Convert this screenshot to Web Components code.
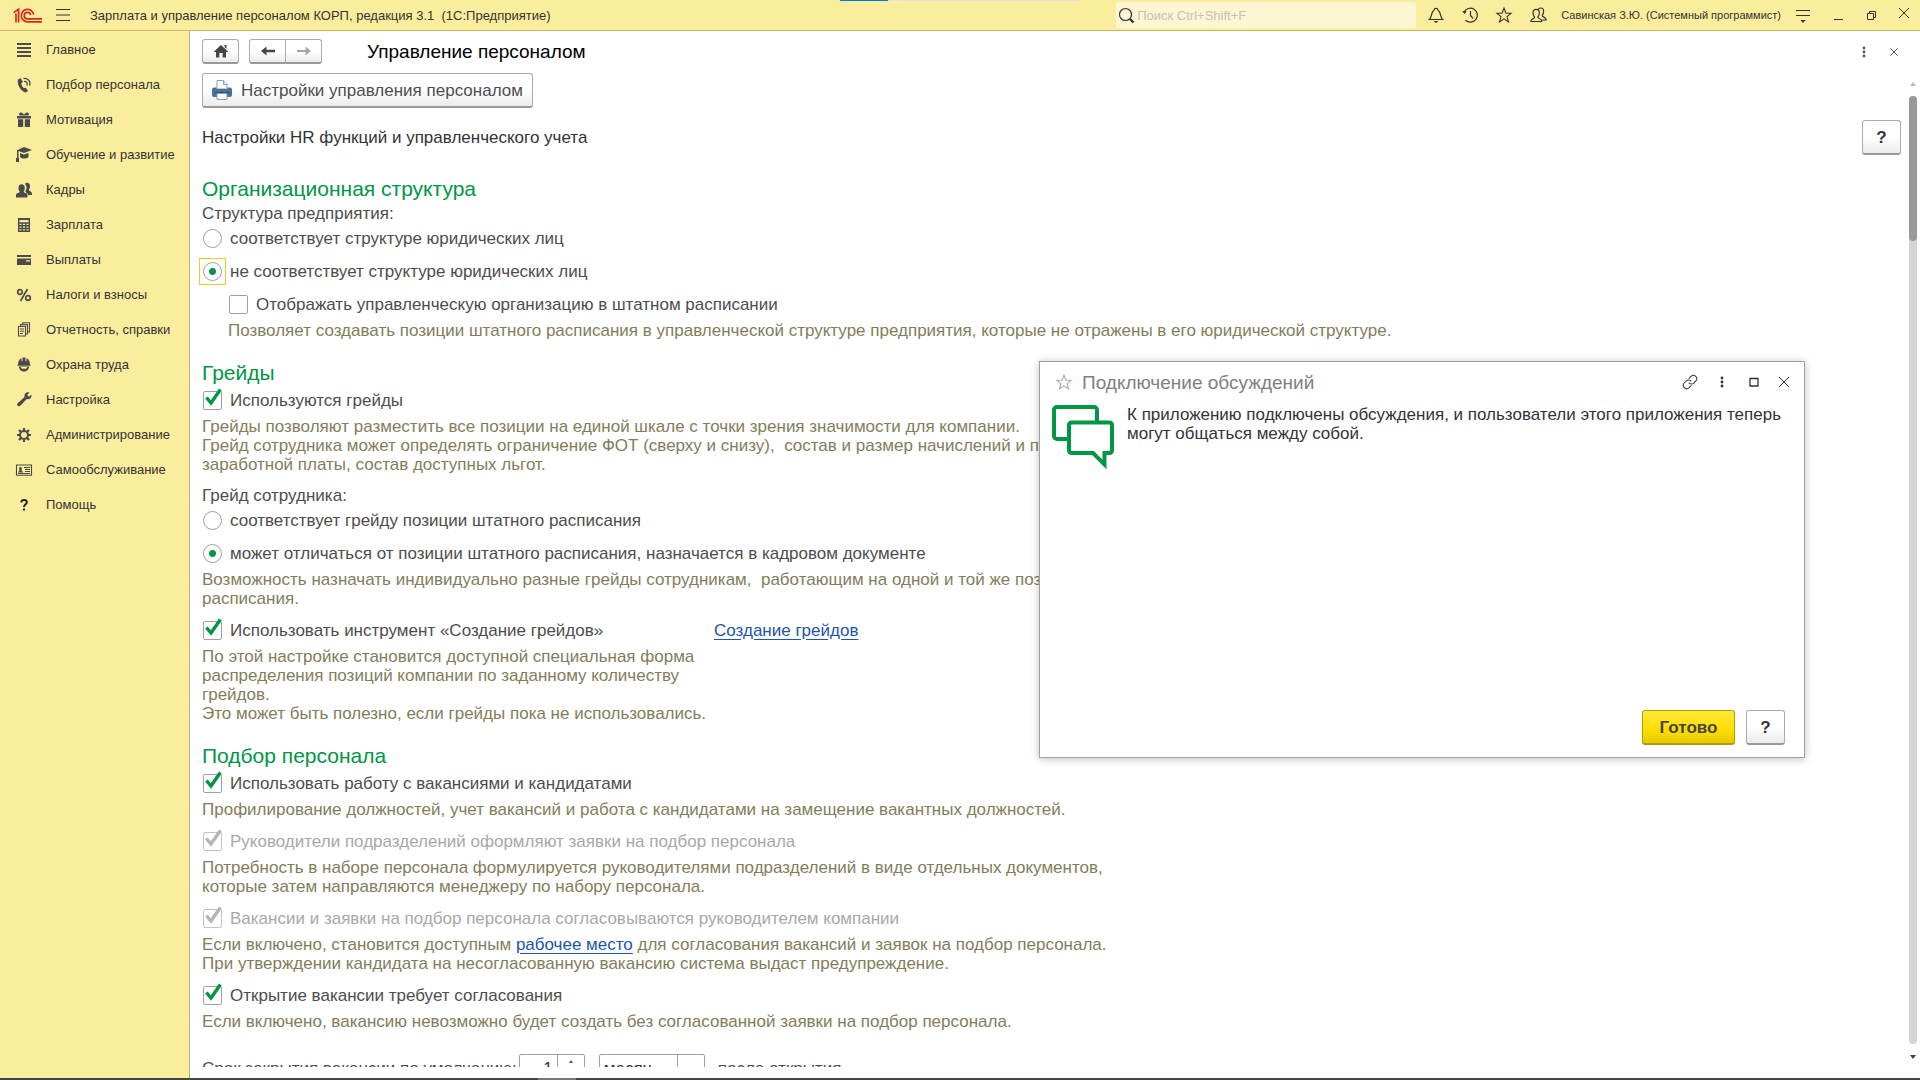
<!DOCTYPE html>
<html lang="ru">
<head>
<meta charset="utf-8">
<title>Управление персоналом</title>
<style>
  html, body {
    margin: 0;
    height: 100%;
    overflow: hidden;
  }

  body {
    font: 17px/19px "Liberation Sans", Arial, sans-serif;
    color: #4d4d4d;
    background: #fff;
  }

  a {
    color: #1c55ae;
    text-underline-offset: 3px;
  }

  .caption {
    height: 24px;
    line-height: 24px;
  }
</style>
</head>
<body>

<template id="app-shell">
  <style>
    :host {
      display: grid;
      grid-template: auto minmax(0, 1fr) 2px / 190px minmax(0, 1fr);
      height: 100%;
    }

    ::slotted([slot=top]), .status {
      grid-column: 1 / -1;
    }

    .status {
      background: linear-gradient(90deg, #444 28%, #777 28%, #777 30%, #444 30%);
    }
  </style>
  <slot name="top"></slot>
  <slot name="side"></slot>
  <slot></slot>
  <div class="status"></div>
  <slot name="window"></slot>
</template>

<template id="top-bar">
  <style>
    :host {
      display: flex;
      align-items: center;
      box-sizing: border-box;
      height: 31px;
      padding: 0 10px 0 13px;
      background: #fbed9e;
      border-bottom: 1px solid #c8b866;
      color: #333;
      font-size: 13px;
      position: relative;
    }

    .progress {
      position: absolute;
      top: 0;
      left: 840px;
      width: 240px;
      height: 1px;
      background: linear-gradient(90deg, #0078d7 20%, #e2e2e2 20%);
    }

    button {
      display: flex;
      border: 0;
      padding: 0;
      background: none;
      color: inherit;
    }

    .burger {
      margin: 0 20px 0 14px;
    }

    h1 {
      flex: 1;
      margin: 0;
      font-size: 13px;
      font-weight: normal;
      white-space: pre;
    }

    label {
      display: flex;
      align-items: center;
      box-sizing: border-box;
      width: 300px;
      height: 26px;
      padding-left: 2px;
      border-radius: 3px;
      background: #fdf6d3;
    }

    input {
      flex: 1;
      min-width: 0;
      border: 0;
      padding: 0 2px;
      background: none;
      font: inherit;
      outline: none;
    }

    input::placeholder {
      color: #c5c2b4;
    }

    .tools {
      display: flex;
      gap: 18px;
      margin: 0 14px 0 12px;
    }

    .user {
      font-size: 11px;
      margin-right: 15px;
    }

    .window {
      display: flex;
      gap: 18px;
      margin-left: 20px;
    }
  </style>
  <div class="progress"></div>
  <ui-icon name="logo"></ui-icon>
  <button class="burger" aria-label="Меню"><ui-icon name="burger"></ui-icon></button>
  <h1><slot></slot></h1>
  <label>
    <ui-icon name="search"></ui-icon>
    <input type="text" placeholder="Поиск Ctrl+Shift+F" aria-label="Поиск">
  </label>
  <div class="tools">
    <button aria-label="Уведомления"><ui-icon name="bell"></ui-icon></button>
    <button aria-label="История"><ui-icon name="history"></ui-icon></button>
    <button aria-label="Избранное"><ui-icon name="star"></ui-icon></button>
    <button aria-label="Обсуждения"><ui-icon name="users"></ui-icon></button>
  </div>
  <span class="user"><slot name="user"></slot></span>
  <button aria-label="Сервис"><ui-icon name="service"></ui-icon></button>
  <div class="window">
    <button aria-label="Свернуть"><ui-icon name="minimize"></ui-icon></button>
    <button aria-label="Развернуть"><ui-icon name="restore"></ui-icon></button>
    <button aria-label="Закрыть"><ui-icon name="close"></ui-icon></button>
  </div>
</template>

<template id="side-nav">
  <style>
    :host {
      display: block;
      background: #fbed9e;
      border-right: 1px solid #b9b073;
      font-size: 13px;
    }

    nav {
      display: flex;
      flex-direction: column;
      padding-top: 1px;
    }

    a {
      display: flex;
      align-items: center;
      gap: 14px;
      height: 35px;
      padding-left: 16px;
      color: #333;
      text-decoration: none;
      white-space: nowrap;
    }

    ui-icon {
      color: #4a4a4a;
    }
  </style>
  <nav></nav>
</template>

<template id="form-page">
  <style>
    :host {
      display: flex;
      flex-direction: column;
      min-width: 0;
      min-height: 0;
      padding-bottom: 11px;
    }

    header {
      display: flex;
      align-items: center;
      padding: 8px 22px 0 12px;
    }

    .nav {
      display: flex;
      margin-left: 10px;
    }

    .nav push-button:first-child {
      --radius: 3px 0 0 3px;
    }

    .nav push-button:last-child {
      --radius: 0 3px 3px 0;
      margin-left: -1px;
      color: #a5a5a5;
    }

    h2 {
      flex: 1;
      margin: 0 0 0 45px;
      font-size: 19px;
      font-weight: normal;
      color: #000;
    }

    header > button {
      display: flex;
      border: 0;
      padding: 0;
      margin-left: 18px;
      background: none;
      color: #555;
    }

    .body {
      flex: 1;
      display: flex;
      min-height: 0;
    }

    .content {
      flex: 1;
      min-width: 0;
      overflow: hidden;
      padding: 9px 8px 0 12px;
    }

    scroll-bar {
      margin-top: 18px;
    }
  </style>
  <header>
    <push-button class="small" label="Домой"><ui-icon name="home"></ui-icon></push-button>
    <div class="nav">
      <push-button class="small" label="Назад"><ui-icon name="back"></ui-icon></push-button>
      <push-button class="small" label="Вперед"><ui-icon name="forward"></ui-icon></push-button>
    </div>
    <h2><slot name="title"></slot></h2>
    <button aria-label="Еще"><ui-icon name="dots"></ui-icon></button>
    <button aria-label="Закрыть"><ui-icon name="close-small"></ui-icon></button>
  </header>
  <div class="body">
    <div class="content"><slot></slot></div>
    <scroll-bar></scroll-bar>
  </div>
</template>

<template id="scroll-bar">
  <style>
    :host {
      display: flex;
      flex-direction: column;
      align-items: center;
      width: 8px;
      margin-right: 3px;
      padding-bottom: 8px;
    }

    .up, .down {
      border: 3px solid transparent;
      border-top-width: 0;
      border-bottom: 4px solid #bbb;
      margin-bottom: 10px;
    }

    .down {
      border-bottom: 0;
      border-top: 4px solid #444;
      margin: 11px 0 0;
    }

    .track {
      flex: 1;
      width: 8px;
      border-radius: 4px;
      background: #d5d5d5;
    }

    .thumb {
      height: 145px;
      border-radius: 4px;
      background: #999;
    }
  </style>
  <div class="up"></div>
  <div class="track"><div class="thumb"></div></div>
  <div class="down"></div>
</template>

<template id="push-button">
  <style>
    :host {
      display: inline-block;
    }

    button {
      display: flex;
      align-items: center;
      justify-content: center;
      gap: 9px;
      box-sizing: border-box;
      height: 35px;
      min-width: 39px;
      padding: 0 9px;
      border: 1px solid #aaa;
      border-bottom: 2px solid #999;
      border-radius: var(--radius, 3px);
      background: linear-gradient(#fff 50%, #ebebeb);
      font: inherit;
      color: inherit;
      white-space: nowrap;
    }

    :host(.small) button {
      height: 25px;
      min-width: 37px;
    }

    :host(.help) button {
      font-weight: bold;
      color: #333;
    }

    :host(.primary) button {
      min-width: 93px;
      font-size: 17px;
      font-weight: bold;
      border-color: #b39e00;
      background: linear-gradient(#ffe939, #fedd00 60%, #e8cb00);
    }
  </style>
  <button><slot></slot></button>
</template>

<template id="form-section">
  <style>
    :host {
      display: flex;
      flex-direction: column;
      margin-top: 20px;
    }

    h3 {
      margin: 0;
      font-size: 21px;
      line-height: 26px;
      font-weight: normal;
      color: #009646;
    }
  </style>
  <h3></h3>
  <slot></slot>
</template>

<template id="hint-text">
  <style>
    :host {
      display: block;
      margin: 5px 0 10px;
      color: #837d59;
      white-space: nowrap;
    }

    :host(.last) {
      margin-bottom: 0;
    }

    :host(.nested) {
      margin-left: 26px;
    }
  </style>
  <slot></slot>
</template>

<template id="option-row">
  <style>
    :host {
      display: block;
    }

    :host([nested]) {
      margin-left: 26px;
    }

    :host([spaced]) {
      margin-top: 9px;
    }

    :host([first]) {
      margin-top: 2px;
    }

    label {
      display: flex;
      align-items: center;
      gap: 8px;
      width: max-content;
      height: 24px;
      padding-left: 1px;
      white-space: nowrap;
    }

    .box {
      display: grid;
      grid-template: 19px / 19px;
    }

    input, .mark {
      grid-area: 1 / 1;
      margin: 0;
    }

    input {
      appearance: none;
      box-sizing: border-box;
      width: 19px;
      height: 19px;
      border: 1px solid #a0a0a0;
      border-radius: 2px;
      background: #fff;
      outline: none;
    }

    input[type=radio] {
      border-radius: 50%;
    }

    input[type=radio]:checked {
      background: radial-gradient(circle, #009646 3px, #fff 4px);
    }

    :host([focused]) .box {
      outline: 1px solid #f5c928;
      outline-offset: 3px;
    }

    .mark {
      align-self: end;
      color: #009646;
      display: none;
      pointer-events: none;
    }

    input[type=checkbox]:checked + .mark {
      display: block;
    }

    :host([disabled]) {
      color: #a8a8a8;
    }

    :host([disabled]) .mark {
      color: #b5b5b5;
    }

    :host([disabled]) input {
      border-color: #c4c4c4;
    }
  </style>
  <label>
    <span class="box"><input><ui-icon class="mark" name="check"></ui-icon></span>
    <span><slot></slot></span>
  </label>
</template>

<template id="period-field">
  <style>
    :host {
      display: flex;
      align-items: center;
      margin-top: 23px;
      white-space: nowrap;
    }

    .field {
      display: flex;
      box-sizing: border-box;
      height: 28px;
      border: 1px solid #a0a0a0;
      border-radius: 2px;
      color: #333;
    }

    .number {
      width: 66px;
      margin: 0 14px 0 2px;
    }

    .unit {
      width: 106px;
      margin-right: 13px;
    }

    input, select {
      appearance: none;
      flex: 1;
      min-width: 0;
      border: 0;
      padding: 0 4px;
      background: none;
      font: inherit;
      color: inherit;
    }

    input {
      text-align: right;
    }

    .arrows {
      display: flex;
      flex-direction: column;
      align-items: center;
      justify-content: space-around;
      width: 26px;
      border-left: 1px solid #a0a0a0;
    }

    .up, .down {
      border: 2px solid transparent;
      border-top: 0;
      border-bottom: 3px solid #555;
    }

    .down {
      border-bottom: 0;
      border-top: 3px solid #555;
    }
  </style>
  <label for="count">Срок закрытия вакансии по умолчанию:</label>
  <div class="field number">
    <input id="count" type="text" inputmode="numeric" value="1">
    <span class="arrows"><i class="up"></i><i class="down"></i></span>
  </div>
  <div class="field unit">
    <select aria-label="Единица срока"><option>месяц</option></select>
    <span class="arrows"><i class="down"></i></span>
  </div>
  <span>после открытия</span>
</template>

<template id="dialog-window">
  <style>
    :host {
      position: absolute;
      top: 361px;
      right: 115px;
      display: flex;
      flex-direction: column;
      box-sizing: border-box;
      width: 766px;
      height: 397px;
      border: 1px solid #a0a0a0;
      background: #fff;
      box-shadow: 0 1px 8px rgba(0, 0, 0, .25);
      color: #333;
    }

    header {
      display: flex;
      align-items: center;
      box-sizing: border-box;
      height: 42px;
      padding: 0 14px 2px 16px;
    }

    h2 {
      flex: 1;
      margin: 0 0 0 10px;
      font-size: 19px;
      font-weight: normal;
      color: #808080;
    }

    header button {
      display: flex;
      border: 0;
      padding: 0;
      margin-left: 16px;
      background: none;
      color: #333;
    }

    .star {
      color: #aab;
    }

    .message {
      flex: 1;
      display: flex;
      align-items: flex-start;
      gap: 12px;
      padding: 0 12px;
    }

    p {
      margin: 0;
      padding-top: 1px;
    }

    footer {
      display: flex;
      justify-content: flex-end;
      gap: 11px;
      padding: 0 19px 12px;
      color: #444;
    }
  </style>
  <header>
    <ui-icon class="star" name="star"></ui-icon>
    <h2><slot name="title"></slot></h2>
    <button aria-label="Ссылка"><ui-icon name="link"></ui-icon></button>
    <button aria-label="Еще"><ui-icon name="dots"></ui-icon></button>
    <button aria-label="Развернуть"><ui-icon name="maximize"></ui-icon></button>
    <button aria-label="Закрыть"><ui-icon name="close"></ui-icon></button>
  </header>
  <div class="message">
    <ui-icon name="chat"></ui-icon>
    <p><slot></slot></p>
  </div>
  <footer>
    <push-button class="primary">Готово</push-button>
    <push-button class="help">?</push-button>
  </footer>
</template>

<template id="form-intro">
  <style>
    :host {
      display: flex;
      align-items: center;
      justify-content: space-between;
      margin: 12px 0 21px;
      color: #333;
    }
  </style>
  <slot></slot>
  <push-button class="help">?</push-button>
</template>

<template id="tool-row">
  <style>
    :host {
      display: grid;
      grid-template-columns: 512px auto;
      justify-content: start;
      align-items: center;
    }
  </style>
  <slot></slot>
</template>

<app-shell>
  <top-bar slot="top">Зарплата и управление персоналом КОРП, редакция 3.1&nbsp; (1С:Предприятие)<span slot="user">Савинская З.Ю. (Системный программист)</span></top-bar>
  <side-nav slot="side"></side-nav>
  <form-page>
    <span slot="title">Управление персоналом</span>
    <push-button><ui-icon name="printer"></ui-icon>Настройки управления персоналом</push-button>
    <form-intro>Настройки HR функций и управленческого учета</form-intro>

    <form-section heading="Организационная структура">
      <div class="caption">Структура предприятия:</div>
      <option-row type="radio">соответствует структуре юридических лиц</option-row>
      <option-row type="radio" checked focused spaced>не соответствует структуре юридических лиц</option-row>
      <option-row type="checkbox" nested spaced>Отображать управленческую организацию в штатном расписании</option-row>
      <hint-text class="nested last">Позволяет создавать позиции штатного расписания в управленческой структуре предприятия, которые не отражены в его юридической структуре.</hint-text>
    </form-section>

    <form-section heading="Грейды">
      <option-row type="checkbox" checked first>Используются грейды</option-row>
      <hint-text>Грейды позволяют разместить все позиции на единой шкале с точки зрения значимости для компании.<br>Грейд сотрудника может определять ограничение ФОТ (сверху и снизу),&nbsp; состав и размер начислений и показателей<br>заработной платы, состав доступных льгот.</hint-text>
      <div class="caption">Грейд сотрудника:</div>
      <option-row type="radio">соответствует грейду позиции штатного расписания</option-row>
      <option-row type="radio" checked spaced>может отличаться от позиции штатного расписания, назначается в кадровом документе</option-row>
      <hint-text>Возможность назначать индивидуально разные грейды сотрудникам,&nbsp; работающим на одной и той же позиции<br>расписания.</hint-text>
      <tool-row>
        <option-row type="checkbox" checked>Использовать инструмент «Создание грейдов»</option-row>
        <a href="#">Создание грейдов</a>
      </tool-row>
      <hint-text class="last">По этой настройке становится доступной специальная форма<br>распределения позиций компании по заданному количеству<br>грейдов.<br>Это может быть полезно, если грейды пока не использовались.</hint-text>
    </form-section>

    <form-section heading="Подбор персонала">
      <option-row type="checkbox" checked first>Использовать работу с вакансиями и кандидатами</option-row>
      <hint-text>Профилирование должностей, учет вакансий и работа с кандидатами на замещение вакантных должностей.</hint-text>
      <option-row type="checkbox" checked disabled>Руководители подразделений оформляют заявки на подбор персонала</option-row>
      <hint-text>Потребность в наборе персонала формулируется руководителями подразделений в виде отдельных документов,<br>которые затем направляются менеджеру по набору персонала.</hint-text>
      <option-row type="checkbox" checked disabled>Вакансии и заявки на подбор персонала согласовываются руководителем компании</option-row>
      <hint-text>Если включено, становится доступным <a href="#">рабочее место</a> для согласования вакансий и заявок на подбор персонала.<br>При утверждении кандидата на несогласованную вакансию система выдаст предупреждение.</hint-text>
      <option-row type="checkbox" checked>Открытие вакансии требует согласования</option-row>
      <hint-text class="last">Если включено, вакансию невозможно будет создать без согласованной заявки на подбор персонала.</hint-text>
      <period-field></period-field>
    </form-section>
  </form-page>
  <dialog-window slot="window">
    <span slot="title">Подключение обсуждений</span>
    К приложению подключены обсуждения, и пользователи этого приложения теперь могут общаться между собой.
  </dialog-window>
</app-shell>

<script>
const MENU = [
  { icon: 'main', title: 'Главное' },
  { icon: 'phone', title: 'Подбор персонала' },
  { icon: 'gift', title: 'Мотивация' },
  { icon: 'cap', title: 'Обучение и развитие' },
  { icon: 'people', title: 'Кадры' },
  { icon: 'calc', title: 'Зарплата' },
  { icon: 'card', title: 'Выплаты' },
  { icon: 'percent', title: 'Налоги и взносы' },
  { icon: 'docs', title: 'Отчетность, справки' },
  { icon: 'helmet', title: 'Охрана труда' },
  { icon: 'wrench', title: 'Настройка' },
  { icon: 'gear', title: 'Администрирование' },
  { icon: 'badge', title: 'Самообслуживание' },
  { icon: 'help', title: 'Помощь' }
];

// name: [width, height, markup]
const line = 'fill="none" stroke="currentColor"';
const ICONS = {
  'logo': [29, 15, `<g fill="none" stroke="#d9271c" stroke-width="1.7"><path d="M.6 4.6L5.6 1.2V14.6M3 5.5V14.6M20.6 6.6A6.2 6.2 0 1 0 14.6 13.8H29M17.6 7.2A3.2 3.2 0 1 0 14.6 10.8H29"/></g>`],
  'burger': [14, 14, `<path ${line} stroke-width="1.2" d="M0 1.5H14M0 7H14M0 12.5H14"/>`],
  'search': [17, 17, `<g ${line} stroke-width="1.2"><circle cx="7.5" cy="7.5" r="6"/><path stroke-width="2.4" d="M12 12l3.500 3.500"/></g>`],
  'bell': [16, 16, `<path ${line} stroke-width="1.2" d="M1.5 12.5C4 10.5 3 4.5 6 3.2C6.5 .8 9.5 .8 10 3.2C13 4.5 12 10.5 14.5 12.5Z"/><path fill="currentColor" d="M5.5 14h5L8 16z"/>`],
  'history': [16, 16, `<path ${line} stroke-width="1.2" d="M2 5.2A7 7 0 1 1 3.5 13.2M8.5 4V8.5L11 11.5"/><path fill="currentColor" d="M0 4.5l4.5-.8L3 7z"/>`],
  'star': [16, 16, `<path ${line} stroke-width="1.1" d="M8 1l1.9 5.1 5.2.2-4.1 3.3 1.5 5.3L8 11.9l-4.5 3 1.5-5.3L.9 6.3l5.2-.2z"/>`],
  'users': [17, 16, `<path ${line} stroke-width="1.2" d="M.8 14.5C.8 11 4.6 12 4.6 10 3.4 8.8 3 7.4 3 5.6 3 3.6 4.4 2.4 6.2 2.4S9.4 3.6 9.4 5.6C9.4 7.4 9 8.8 7.8 10 7.8 12 11.8 11 11.8 14.5ZM8.4 2.2C9 1.3 9.8 1 10.6 1 12.4 1 13.6 2.2 13.6 4.2 13.6 6 13 7.4 12.2 8.4 12.2 10.6 16 9.6 16.2 13H12"/>`],
  'service': [14, 16, `<path ${line} d="M0 3.5H14M0 8.5H14"/><path fill="currentColor" d="M4.5 13h5L7 16z"/>`],
  'minimize': [16, 16, `<path ${line} d="M4 12.5H13"/>`],
  'restore': [16, 16, `<path ${line} d="M3.5 6.5h6v6h-6zM5.5 6V4.5h6v6H10"/>`],
  'close': [12, 12, `<path ${line} d="M1 1l10 10M11 1L1 11"/>`],
  'close-small': [8, 8, `<path ${line} d="M.5 .5l7 7M7.5 .5l-7 7"/>`],
  'dots': [16, 12, `<g fill="currentColor"><circle cx="8" cy="2" r="1.4"/><circle cx="8" cy="6" r="1.4"/><circle cx="8" cy="10" r="1.4"/></g>`],
  'maximize': [16, 12, `<path ${line} stroke-width="1.3" d="M4 2.5h8v7.5H4z"/>`],
  'link': [16, 16, `<path ${line} stroke-width="1.5" transform="scale(.67)" d="M10 13a5 5 0 0 0 7.540 .540l3-3a5 5 0 0 0-7.070-7.070l-3.500 3.500M14 11a5 5 0 0 0-7.540-.540l-3 3a5 5 0 0 0 7.070 7.070l3.500-3.500"/>`],
  'home': [16, 14, `<path fill="#444" d="M8 1l7.5 7H13v5.5H9.6V9H6.4v4.5H3V8H.5zM11.5 1H13.5V5l-2-2z"/>`],
  'back': [16, 12, `<path fill="#444" d="M1 6l5.500-4.500v3.300h8.500v2.400H6.500v3.300z"/>`],
  'forward': [16, 12, `<path fill="currentColor" d="M15 6l-5.500-4.500v3.500H1v2h8.500v3.500z"/>`],
  'printer': [20, 20, `<path fill="#fff" stroke="#8a9db5" d="M5 9V.5h6.500l3.500 4V9z"/><path fill="#dfe6ef" stroke="#8a9db5" d="M11.500 .5v4h3.500"/><path fill="#4d7198" d="M2 7.500h2.500v1.500h11V7.500H18c1 0 2 1 2 2V15c0 1-.8 2-2 2H2c-1.200 0-2-1-2-2V9.500c0-1 1-2 2-2z"/><path fill="#345378" d="M2.500 12h15v1.500h-15z"/><path fill="#fff" stroke="#8a9db5" d="M5 13.500h10v6H5z"/>`],
  'check': [19, 23, `<path ${line} stroke-width="3.4" d="M3.400 10.500l4.600 5.500L17.400 2.500"/>`],
  'chat': [63, 63, `<g fill="#fff" stroke="#009646" stroke-width="4"><rect x="2" y="3" width="43" height="32" rx="3"/><path d="M20 18.500H57Q60 18.500 60 21.500V46Q60 49 57 49H52.500V60.500L41 49H20Q17 49 17 46V21.500Q17 18.500 20 18.500Z"/></g>`],
  'main': [16, 14, `<path ${line} stroke-width="2" d="M1 1H15M1 5H15M1 9H15M1 13H15"/>`],
  'phone': [16, 16, `<path fill="currentColor" d="M2 2.500L4.500 1 7 5 5.300 6.300C5.500 8.500 6.600 10.300 8 11.200L9.800 10.500 12 14 9.600 15.500C5.500 14.500 .5 8 2 2.500z"/><path ${line} stroke-width="1.300" d="M7.500 1.500C12 1 15 4.500 13.500 8.500M8 4.500C10.500 4.200 11.800 6 11 8.500"/>`],
  'gift': [16, 15, `<path fill="currentColor" d="M1 4h14v2.500H1zM2 7.200h5.200V15H2zM8.800 7.200H14V15H8.800zM3 1.500C4.500 -.3 6.500 .5 8 2.500 9.500 .5 11.500 -.3 13 1.500L12.500 3.500H3.500z"/>`],
  'cap': [16, 15, `<path fill="currentColor" d="M8 0l8 3-8 3-5.500-2V11H3v4H0V11h1V3.200zM4 6l4 1.500L12.500 6v4c-2 2-6.500 2-8.500 0z"/>`],
  'people': [16, 16, `<path fill="currentColor" d="M9 2C10 0 14 .5 14 4c0 2-.6 3-1.200 3.800 0 1.500 3.200 1.200 3.200 4.200v1h-4C11.500 10.500 9 11 9.500 9 11 7 11 4 9 2zM0 15.500V13c0-2 3.700-1.800 3.700-3.400C2.900 8.700 2.500 7.500 2.500 5.700 2.500 3.500 3.800 2.300 5.600 2.300S8.800 3.500 8.800 5.700c0 1.800-.4 3-1.200 3.900 0 1.600 3.800 1.400 3.800 3.400v2.500z"/>`],
  'calc': [16, 14, `<path ${line} stroke-width="1.400" d="M2.700 .7h10.600v12.600H2.700zM2.700 5h10.600M2.700 7.800h10.600M2.700 10.500h10.600M6.200 5v8M9.800 5v8M2.700 1.400h10.600"/>`],
  'card': [16, 10, `<path fill="currentColor" d="M1 0h14v2H1zM1 3.500h14V10H1z"/><path fill="#fbed9e" d="M10 5.200h4v1.300h-4z"/>`],
  'percent': [16, 14, `<g ${line} stroke-width="1.700"><circle cx="4" cy="4" r="2.300"/><circle cx="12" cy="10" r="2.300"/><path d="M11.500 1L4.500 13"/></g>`],
  'docs': [16, 15, `<path ${line} stroke-width="1.100" d="M2.500 4.500h7v9.500h-7zM4.500 4.500V2.600h7V12H10M6.500 2.500V.7h7V10H11.500M4 7h4M4 9.200h4M4 11.500h3"/>`],
  'helmet': [16, 15, `<path fill="currentColor" d="M2 7.500C2 4 3.500 2 5.500 1.200V4h1V.5h3V4h1V1.200C12.500 2 14 4 14 7.500h.5v1.300h-13V7.500zM2.800 9.500H13.200C13 12.500 10.500 14.500 8 14.500S3 12.500 2.800 9.500z"/><path fill="#fbed9e" d="M4.500 10H11.500L10 11.800H6z"/>`],
  'wrench': [16, 15, `<path fill="currentColor" d="M10 .8c1.500-.8 2.600-.6 3.400-.3L11.200 3l1.700 1.700L15.300 2.400c.8 3-1.500 5.300-4.500 4.700L4 14C2.500 15.200 .2 13.200 1.400 11.500L8.500 5C8.200 3.300 8.700 1.600 10 .8z"/>`],
  'gear': [16, 16, `<circle cx="8" cy="8" r="4" ${line} stroke-width="2"/><path ${line} stroke-width="2.200" d="M8 1v2.500M8 12.500V15M1 8h2.500M12.500 8H15M3 3l2 2M11 11l2 2M13 3l-2 2M5 11l-2 2"/>`],
  'badge': [16, 12, `<path ${line} stroke-width="1.100" d="M.5 1h15v10.300H.5zM8 3.500h6M9 5.500h5M9 7.500h5M2 9.500h12"/><path fill="currentColor" d="M2 8.500C2 7 3.500 7.500 3.500 6.500 2.800 4.500 3 3 4.500 3S6.200 4.500 5.500 6.500C5.500 7.500 7 7 7 8.500z"/>`],
  'help': [16, 16, `<path fill="none" stroke="#222" stroke-width="2" d="M5.300 5.500C5.500 2.300 10.800 2.300 10.800 5.500 10.800 7.300 8 7.500 8 10M8 11.500v2"/>`]
};

class BaseElement extends HTMLElement {
  constructor() {
    super();
    this.attachShadow({mode: 'open'});
    const tpl = document.getElementById(this.localName).content;
    this.shadowRoot.appendChild(document.importNode(tpl, true));
  }
}

class UiIcon extends HTMLElement {
  connectedCallback() {
    if (this.shadowRoot) return;
    const [width, height, markup] = ICONS[this.getAttribute('name')];
    this.attachShadow({mode: 'open'}).innerHTML = `
      <style>
        :host { display: block; flex: none; }
        svg { display: block; overflow: visible; }
      </style>
      <svg width="${width}" height="${height}" viewBox="0 0 ${width} ${height}" aria-hidden="true">${markup}</svg>`;
  }
}

class SideNav extends BaseElement {
  connectedCallback() {
    const nav = this.shadowRoot.querySelector('nav');
    for (const item of MENU) {
      const link = document.createElement('a');
      link.href = '#';
      link.innerHTML = `<ui-icon name="${item.icon}"></ui-icon><span>${item.title}</span>`;
      nav.appendChild(link);
    }
  }
}

class PushButton extends BaseElement {
  connectedCallback() {
    const label = this.getAttribute('label');
    if (label) {
      this.shadowRoot.querySelector('button').setAttribute('aria-label', label);
    }
  }
}

class FormSection extends BaseElement {
  connectedCallback() {
    this.shadowRoot.querySelector('h3').textContent = this.getAttribute('heading');
  }
}

class OptionRow extends BaseElement {
  connectedCallback() {
    const input = this.shadowRoot.querySelector('input');
    input.type = this.getAttribute('type');
    input.checked = this.hasAttribute('checked');
    input.disabled = this.hasAttribute('disabled');
  }
}

customElements.define('ui-icon', UiIcon);
customElements.define('push-button', PushButton);
customElements.define('scroll-bar', class extends BaseElement {});
customElements.define('side-nav', SideNav);
customElements.define('top-bar', class extends BaseElement {});
customElements.define('form-intro', class extends BaseElement {});
customElements.define('hint-text', class extends BaseElement {});
customElements.define('option-row', OptionRow);
customElements.define('tool-row', class extends BaseElement {});
customElements.define('period-field', class extends BaseElement {});
customElements.define('form-section', FormSection);
customElements.define('form-page', class extends BaseElement {});
customElements.define('dialog-window', class extends BaseElement {});
customElements.define('app-shell', class extends BaseElement {});
</script>
</body>
</html>
